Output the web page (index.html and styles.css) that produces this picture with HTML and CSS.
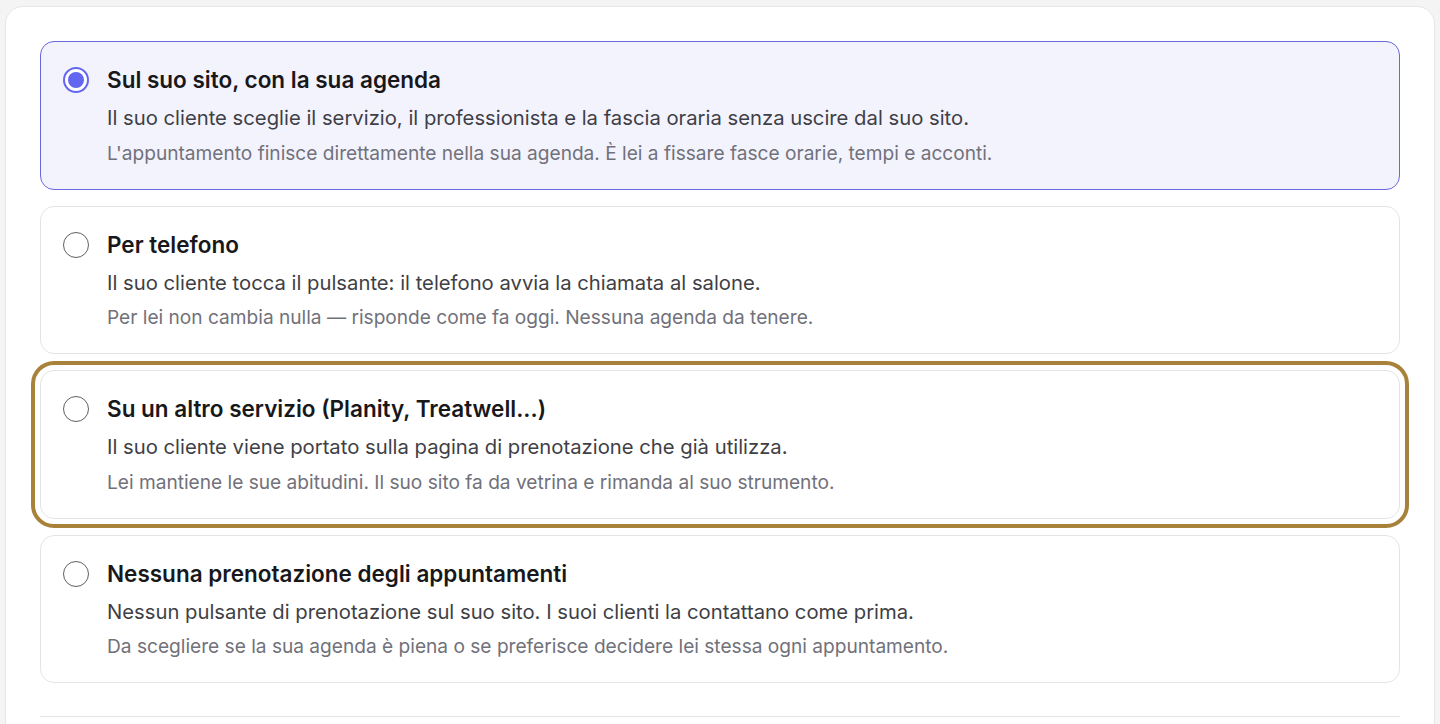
FILE: index.html
```html
<!DOCTYPE html>
<html lang="it">
<head>
<meta charset="utf-8">
<title>Prenotazione</title>
<link rel="stylesheet" href="styles.css">
</head>
<body>
<div class="panel">
  <div class="options">
    <label class="option selected">
      <span class="radio"><span class="dot"></span></span>
      <span class="body">
        <span class="title">Sul suo sito, con la sua agenda</span>
        <span class="desc">Il suo cliente sceglie il servizio, il professionista e la fascia oraria senza uscire dal suo sito.</span>
        <span class="note">L'appuntamento finisce direttamente nella sua agenda. È lei a fissare fasce orarie, tempi e acconti.</span>
      </span>
    </label>
    <label class="option">
      <span class="radio"></span>
      <span class="body">
        <span class="title">Per telefono</span>
        <span class="desc">Il suo cliente tocca il pulsante: il telefono avvia la chiamata al salone.</span>
        <span class="note">Per lei non cambia nulla — risponde come fa oggi. Nessuna agenda da tenere.</span>
      </span>
    </label>
    <label class="option focused">
      <span class="radio"></span>
      <span class="body">
        <span class="title">Su un altro servizio (Planity, Treatwell...)</span>
        <span class="desc">Il suo cliente viene portato sulla pagina di prenotazione che già utilizza.</span>
        <span class="note">Lei mantiene le sue abitudini. Il suo sito fa da vetrina e rimanda al suo strumento.</span>
      </span>
    </label>
    <label class="option">
      <span class="radio"></span>
      <span class="body">
        <span class="title">Nessuna prenotazione degli appuntamenti</span>
        <span class="desc">Nessun pulsante di prenotazione sul suo sito. I suoi clienti la contattano come prima.</span>
        <span class="note">Da scegliere se la sua agenda è piena o se preferisce decidere lei stessa ogni appuntamento.</span>
      </span>
    </label>
  </div>
  <div class="divider"></div>
</div>
</body>
</html>
```
FILE: styles.css
```css
* { box-sizing: border-box; }
html, body { margin: 0; padding: 0; }
body {
  background: #f4f4f5;
  font-family: Inter, "Noto Sans", sans-serif;
  color: #18181b;
  height: 724px;
  overflow: hidden;
  padding: 6px 5px 0 5px;
}
.panel {
  background: #ffffff;
  border: 1px solid #e6e6e8;
  border-radius: 18px;
  padding: 34px 34px 0 34px;
  min-height: 740px;
}
.options {
  display: flex;
  flex-direction: column;
  gap: 16px;
}
.option {
  display: flex;
  align-items: flex-start;
  gap: 18px;
  border: 1px solid #e4e4e7;
  border-radius: 14px;
  background: #ffffff;
  padding: 24px 22px 0 22px;
  height: 148.5px;
  cursor: pointer;
}
.option.selected {
  background: #f3f3fe;
  border-color: #6a67dc;
}
.option.focused {
  outline: 4px solid #a8823a;
  outline-offset: 5px;
}
.radio {
  flex: none;
  width: 26px;
  height: 26px;
  margin-top: 1px;
  border-radius: 50%;
  border: 1.5px solid #5f5f66;
  background: #fff;
  display: flex;
  align-items: center;
  justify-content: center;
}
.option.selected .radio {
  border: 2px solid #6366f1;
}
.dot {
  width: 16px;
  height: 16px;
  border-radius: 50%;
  background: #6366f1;
}
.body {
  display: flex;
  flex-direction: column;
}
.title {
  font-size: 22.5px;
  line-height: 28px;
  font-weight: 600;
  color: #18181b;
}
.desc {
  margin-top: 10px;
  font-size: 20.25px;
  line-height: 28px;
  color: #3f3f46;
}
.note {
  margin-top: 7.5px;
  font-size: 19.125px;
  line-height: 27px;
  color: #71717a;
}
.divider {
  margin-top: 33px;
  height: 1px;
  background: #e4e4e7;
}
```
